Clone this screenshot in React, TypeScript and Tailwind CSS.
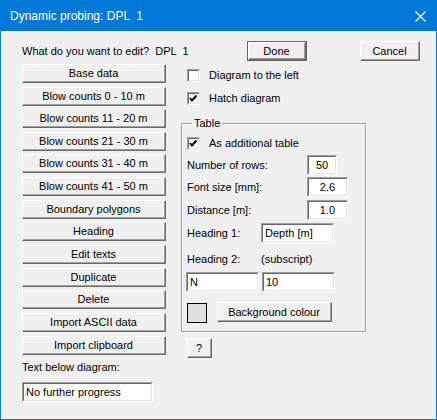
import React from 'react';

const sunken =
  'border border-t-[#a0a0a0] border-l-[#a0a0a0] border-r-white border-b-white bg-white';
const sunkenInner = 'border border-t-[#696969] border-l-[#696969] border-r-[#e3e3e3] border-b-[#e3e3e3]';

function Btn({ label, className = '', inner = '' }: { label: string; className?: string; inner?: string }) {
  return (
    <div className={`border border-t-white border-l-white border-r-[#696969] border-b-[#696969] bg-[#f0f0f0] flex ${className}`}>
      <div className={`flex-1 flex items-center justify-center border-r border-b border-[#a0a0a0] ${inner}`}>
        {label}
      </div>
    </div>
  );
}

function Field({ value, className = '', center = false }: { value: string; className?: string; center?: boolean }) {
  return (
    <div className={`${sunken} h-[20px] flex ${className}`}>
      <div className={`${sunkenInner} flex-1 flex items-center px-[2px] leading-[14px] ${center ? 'justify-center' : ''}`}>
        {value}
      </div>
    </div>
  );
}

function Check({ checked, label }: { checked: boolean; label: string }) {
  return (
    <div className="flex items-center h-[13px]">
      <div className={`${sunken} w-[13px] h-[13px] shrink-0 flex`}>
        <div className={`${sunkenInner} flex-1`}>
          {checked && (
            <svg width="9" height="9" viewBox="0 0 9 9" className="block">
              <polyline points="1,4 3,6.5 7.5,1.5" fill="none" stroke="#000" strokeWidth="1.9" />
            </svg>
          )}
        </div>
      </div>
      <span className="ml-[9px] leading-[13px]">{label}</span>
    </div>
  );
}

// top margin before each button, matching the 22/23px pitch of the original
const leftButtons: [string, string][] = [
  ['Base data', 'mt-0'],
  ['Blow counts 0 - 10 m', 'mt-[4px]'],
  ['Blow counts 11 - 20 m', 'mt-[3px]'],
  ['Blow counts 21 - 30 m', 'mt-[4px]'],
  ['Blow counts 31 - 40 m', 'mt-[3px]'],
  ['Blow counts 41 - 50 m', 'mt-[4px]'],
  ['Boundary polygons', 'mt-[4px]'],
  ['Heading', 'mt-[3px]'],
  ['Edit texts', 'mt-[4px]'],
  ['Duplicate', 'mt-[4px]'],
  ['Delete', 'mt-[3px]'],
  ['Import ASCII data', 'mt-[4px]'],
  ['Import clipboard', 'mt-[4px]'],
];

export default function App() {
  return (
    <div className="w-[437px] h-[420px] bg-[#f0f0f0] border border-[#0078d7] font-['Liberation_Sans',Arial,sans-serif] text-[11px] leading-[14px] text-black overflow-hidden">
      {/* title bar */}
      <div className="h-[30px] bg-[#0078d7] flex items-center pl-[9px] pr-[10px] text-white text-[12px] leading-[16px]">
        <span className="whitespace-pre">Dynamic probing: DPL  1</span>
        <svg width="11" height="11" viewBox="0 0 11 11" className="ml-auto mt-[1px]">
          <path d="M0.5 0.5 L10.5 10.5 M10.5 0.5 L0.5 10.5" stroke="#fff" strokeWidth="1.1" />
        </svg>
      </div>

      <div className="pl-[21px]">
        <div className="mt-[10px] h-[20px] flex items-center">
          <span className="w-[225px] whitespace-pre">What do you want to edit?  DPL  1</span>
          <div className="w-[60px] h-[20px] flex border border-[#646464]">
            <Btn label="Done" className="flex-1" />
          </div>
          <Btn label="Cancel" className="ml-[53px] w-[60px] h-[20px]" />
        </div>

        <div className="flex mt-[3px]">
          {/* left column */}
          <div className="w-[144px] flex flex-col">
            {leftButtons.map(([b, m]) => (
              <Btn key={b} label={b} className={`h-[19px] ${m}`} inner="leading-[13px]" />
            ))}
            <div className="mt-[5px]">Text below diagram:</div>
            <Field value="No further progress" className="mt-[8px] w-[131px]" />
          </div>

          {/* right column */}
          <div className="ml-[15px] w-[185px]">
            <div className="pl-[6px] pt-[5px] flex flex-col gap-[10px]">
              <Check checked={false} label="Diagram to the left" />
              <Check checked label="Hatch diagram" />
            </div>

            <fieldset className="mt-[11px] border border-[#a0a0a0] shadow-[1px_1px_0_#fff,inset_1px_1px_0_#fff] px-0 pb-[8px] m-0">
              <legend className="ml-[10px] px-[2px] leading-[14px]">Table</legend>
              <div className="pl-[5px]">
                <div className="mt-[7px]">
                  <Check checked label="As additional table" />
                </div>
                <div className="mt-[5px] flex items-center h-[20px]">
                  <span className="w-[120px]">Number of rows:</span>
                  <Field value="50" center className="w-[30px]" />
                </div>
                <div className="mt-[2px] flex items-center h-[20px]">
                  <span className="w-[120px]">Font size [mm]:</span>
                  <Field value="2.6" center className="w-[41px]" />
                </div>
                <div className="mt-[3px] flex items-center h-[20px]">
                  <span className="w-[120px]">Distance [m]:</span>
                  <Field value="1.0" center className="w-[41px]" />
                </div>
                <div className="mt-[3px] flex items-center h-[20px]">
                  <span className="w-[74px]">Heading 1:</span>
                  <Field value="Depth [m]" className="w-[73px]" />
                </div>
                <div className="mt-[6px] flex items-center h-[20px]">
                  <span className="w-[74px]">Heading 2:</span>
                  <span>(subscript)</span>
                </div>
                <div className="mt-[3px] flex items-center h-[20px] gap-[3px]">
                  <Field value="N" className="w-[73px] -ml-px" />
                  <Field value="10" className="w-[73px]" />
                </div>
                <div className="mt-[10px] flex items-start">
                  <div className="mt-[1px] w-[20px] h-[20px] border border-black bg-[#e0e0e0]" />
                  <Btn label="Background colour" className="ml-[10px] w-[115px] h-[20px]" />
                </div>
              </div>
            </fieldset>

            <Btn label="?" className="mt-[6px] ml-[6px] w-[25px] h-[20px]" />
          </div>
        </div>
      </div>
    </div>
  );
}
